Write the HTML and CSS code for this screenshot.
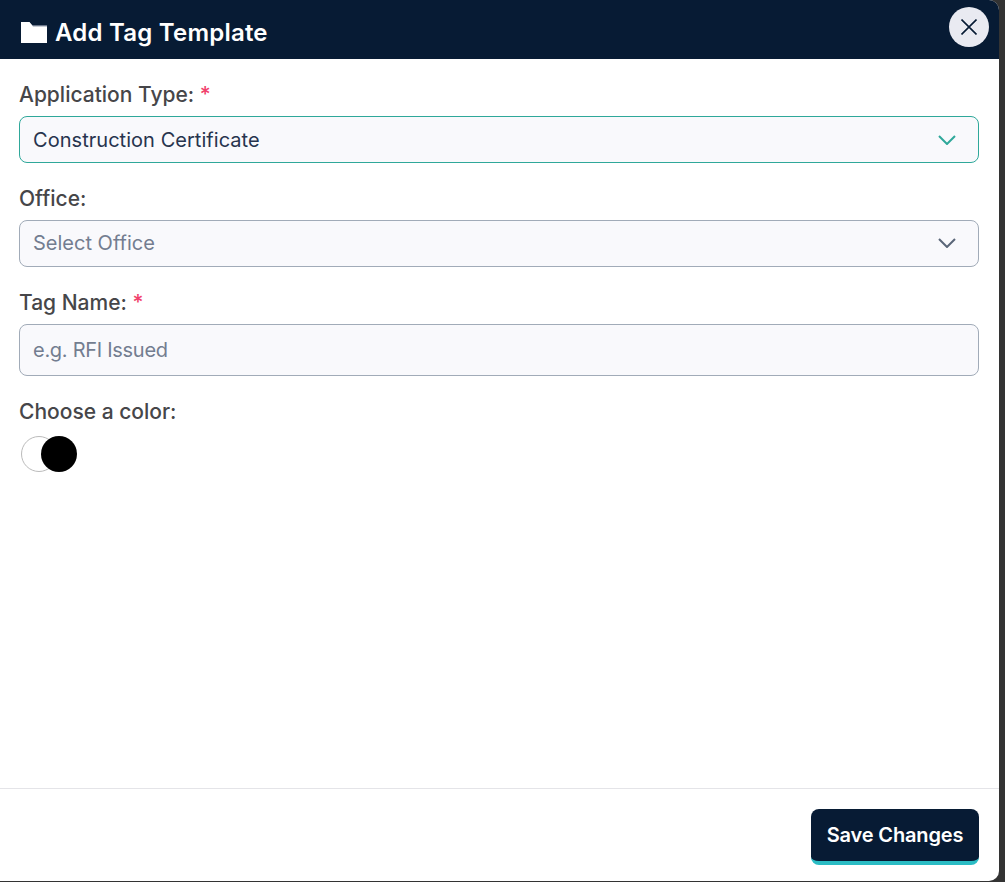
FILE: index.html
```html
<!DOCTYPE html>
<html lang="en">
<head>
<meta charset="utf-8">
<title>Add Tag Template</title>
<link rel="stylesheet" href="styles.css">
</head>
<body>
<div class="modal">
  <header class="modal-header">
    <h1 class="modal-title">
      <svg class="folder" viewBox="0 0 26 21" width="26" height="21"><path d="M8 0l3.500 3.200H26V8H8z" fill="#8a94a5"/><path d="M0 0h8.500l3.500 4.600h14V21H0z" fill="#fff"/></svg>
      Add Tag Template
    </h1>
    <button class="close" type="button" aria-label="Close">
      <svg viewBox="0 0 16 16" width="16" height="16"><path d="M.5.5l15 15M15.500.5l-15 15" stroke="#071b34" stroke-width="1.600" fill="none"/></svg>
    </button>
  </header>
  <main class="modal-body">
    <div class="field">
      <label class="label">Application Type: <span class="req">*</span></label>
      <div class="control control-active">
        <span class="value">Construction Certificate</span>
        <svg class="chev" viewBox="0 0 18 10" width="18" height="10"><path d="M1 1l8 8 8-8" stroke="#2fa89a" stroke-width="2" fill="none"/></svg>
      </div>
    </div>
    <div class="field">
      <label class="label">Office:</label>
      <div class="control">
        <span class="placeholder">Select Office</span>
        <svg class="chev" viewBox="0 0 18 10" width="18" height="10"><path d="M1 1l8 8 8-8" stroke="#5a6678" stroke-width="2" fill="none"/></svg>
      </div>
    </div>
    <div class="field">
      <label class="label">Tag Name: <span class="req">*</span></label>
      <div class="control control-tall">
        <span class="placeholder placeholder-input">e.g. RFI Issued</span>
      </div>
    </div>
    <div class="field">
      <label class="label">Choose a color:</label>
      <div class="swatches">
        <span class="swatch swatch-white"></span>
        <span class="swatch swatch-black"></span>
      </div>
    </div>
  </main>
  <footer class="modal-footer">
    <button class="save" type="button">Save Changes</button>
  </footer>
</div>
</body>
</html>
```
FILE: styles.css
```css
* { box-sizing: border-box; }
html, body { height: 100%; }
body {
  margin: 0;
  background: #333;
  font-family: Inter, "Liberation Sans", sans-serif;
  overflow: hidden;
}
.modal {
  width: 999px;
  height: 881px;
  background: #fff;
  border-radius: 0 10px 10px 0;
  display: flex;
  flex-direction: column;
  overflow: hidden;
}
.modal-header {
  height: 59px;
  flex: none;
  background: #071b34;
  display: flex;
  align-items: center;
  justify-content: space-between;
  padding: 6px 10px 0 21px;
}
.modal-title {
  margin: 0;
  display: flex;
  align-items: center;
  gap: 8px;
  font-size: 24px;
  line-height: 30px;
  font-weight: 600;
  color: #fff;
  letter-spacing: 0.22px;
}
.folder { flex: none; }
.close {
  width: 40px;
  height: 40px;
  margin-top: -11px;
  border: 0;
  border-radius: 50%;
  background: #e9eaf1;
  display: flex;
  align-items: center;
  justify-content: center;
  padding: 0;
}
.modal-body {
  flex: 1;
  padding: 22px 20px 0 19px;
  display: flex;
  flex-direction: column;
  gap: 22px;
}
.label {
  display: block;
  font-size: 21px;
  line-height: 28px;
  font-weight: 500;
  color: #464649;
  margin-bottom: 7px;
}
.req { color: #f1416c; }
.control {
  height: 47px;
  background: #f9f9fc;
  border: 1px solid #a1abb8;
  border-radius: 8px;
  display: flex;
  align-items: center;
  justify-content: space-between;
  padding: 0 22px 1px 13px;
  font-size: 20px;
}
.control-active { border-color: #2fa89a; padding-bottom: 0; }
.control-tall { height: 52px; }
.value { color: #27344e; letter-spacing: 0.04px; }
.placeholder { color: #737d90; }
.placeholder-input { letter-spacing: -0.28px; }
.swatches { display: flex; padding-left: 2px; margin-top: 10px; }
.swatch { width: 36px; height: 36px; border-radius: 50%; display: block; }
.swatch-white { background: #fff; border: 1px solid #bbb; }
.swatch-black { background: #000; margin-left: -16px; }
.modal-footer {
  height: 93px;
  flex: none;
  border-top: 1px solid #e4e4e8;
  display: flex;
  justify-content: flex-end;
  padding: 20px 20px 0 0;
}
.save {
  width: 168px;
  height: 56px;
  border: 0;
  border-bottom: 4px solid #2bbcc4;
  border-radius: 8px;
  background: #071b34;
  color: #fff;
  font-family: inherit;
  font-size: 20px;
  font-weight: 600;
  letter-spacing: -0.15px;
  padding: 0;
}
```
